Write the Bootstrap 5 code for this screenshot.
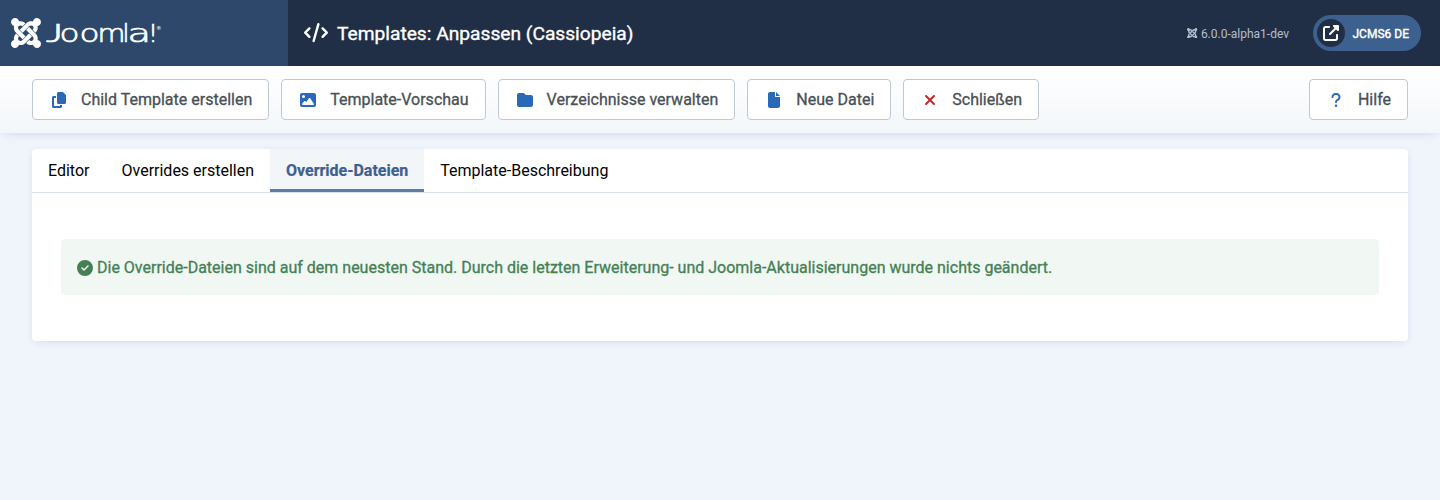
<!DOCTYPE html>
<html lang="de">
<head>
<meta charset="utf-8">
<meta name="viewport" content="width=device-width, initial-scale=1">
<title>Templates: Anpassen (Cassiopeia)</title>
<link href="https://cdn.jsdelivr.net/npm/bootstrap@5.3.0/dist/css/bootstrap.min.css" rel="stylesheet">
<style>
body { background: #f0f4fb; font-family: Roboto, sans-serif; font-size: 16px; min-height: 500px; }
svg { display: block; flex: none; fill: currentColor; }
.site-header { height: 66px; background: #212f46; color: #fff; }
.site-logo { width: 288px; background: #2d486b; padding-left: 11px; }
.site-logo .wordmark { margin-left: 5px; }
.page-heading { font-size: 19.2px; font-weight: 400; -webkit-text-stroke: .35px currentColor; line-height: 1.2; padding-left: 16px; }
.page-heading svg { margin-right: 9px; }
.page-heading span { padding-top: 1px; }
.version { font-size: 12px; color: #b3bfcd; margin-right: 24px; }
.version span { margin-left: 3px; padding-top: 1px; }
.site-link { background: #3d618f; height: 36px; width: 108px; padding-left: 4px; margin-right: 19px; font-size: 12px; font-weight: 400; -webkit-text-stroke: .4px currentColor; }
.site-link .disc { width: 28px; height: 28px; background: #212f46; margin-right: 7.5px; }
.site-link .site-name { padding-top: 1px; }
.subhead { height: 67px; padding: 13px 32px; gap: 12px; background: linear-gradient(#fff, #f3f7fa); box-shadow: 0 3px 10px -4px rgba(40,70,130,.22); }
.tool { display: flex; align-items: center; height: 41px; padding: 0 16px; border: 1px solid #c0c8d5; border-radius: 4px; background: #fff; color: #484f56; -webkit-text-stroke: .3px currentColor; white-space: nowrap; }
.tool .glyph { width: 20px; margin-right: 12px; color: #2a69b8; display: flex; justify-content: center; }
.tool .glyph.closing { color: #c52827; }
.panel { margin: 16px 32px 0; height: 192px; background: #fff; border-radius: 4px; box-shadow: 0 2px 8px -2px rgba(40,70,130,.16); overflow: hidden; }
.tabs { height: 44px; border-bottom: 1px solid #d8e1ed; }
.tabs a { padding: 0 16px; height: 43px; line-height: 43px; color: #000; text-decoration: none; white-space: nowrap; }
.tabs a.current { background: #f3f6f9; color: #3d618f; font-weight: 700; letter-spacing: -.02px; -webkit-text-stroke: .2px currentColor; box-shadow: inset 0 -3px #5d7ca5; }
.notice { margin: 46px 29px 0; height: 56px; padding: 1px 16px 0; gap: 4px; border-radius: 4px; background: #f1f8f4; color: #448054; -webkit-text-stroke: .3px currentColor; }
.tool svg, .notice svg, .page-heading svg { -webkit-text-stroke: 0; }
</style>
</head>
<body>
<svg width="0" height="0" class="position-absolute"><defs>
<symbol id="joomla" viewBox="0 32 448 448"><path d="M.6 92.1C.6 58.8 27.4 32 60.4 32c30 0 54.5 21.9 59.2 50.2 32.6-7.6 67.1.6 96.5 30l-44.3 44.3c-20.5-20.5-42.6-16.3-55.4-3.5-14.3 14.3-14.3 37.9 0 52.2l99.5 99.5-44 44.3c-87.7-87.2-49.7-49.7-99.8-99.7-26.8-26.5-35-64.8-24.8-98.9C20.4 144.6.6 120.7.6 92.1zm129.5 116.4l44.3 44.3c10-10 89.7-89.7 99.7-99.8 14.3-14.3 37.6-14.3 51.9 0 12.8 12.8 17 35-3.5 55.4l44 44.3c31.2-31.2 38.5-67.6 28.9-101.2 29.2-4.1 51.9-29.2 51.9-59.5 0-33.2-26.8-60.1-59.8-60.1-30.3 0-55.4 22.5-59.5 51.6-33.8-9.9-71.7-1.5-98.3 25.1-18.3 19.1-71.1 71.5-99.6 99.9zm266.3 152.2c8.2-32.7-.9-68.5-26.3-93.9-11.8-12.2 5 4.7-99.5-99.7l-44.3 44.3 99.7 99.7c14.3 14.3 14.3 37.6 0 51.9-12.8 12.8-35 17-55.4-3.5l-44 44.3c27.6 30.2 68 38.8 102.7 28 5.5 27.4 29.7 48.1 58.9 48.1 33 0 59.8-26.8 59.8-60.1 0-30.2-22.5-55-51.6-59.1zm-84.3-53.1l-44-44.3c-87 86.4-50.4 50.4-99.7 99.8-14.3 14.3-37.6 14.3-51.9 0-13.1-13.4-16.9-35.3 3.2-55.4l-44-44.3c-30.2 30.2-38 65.2-29.5 98.3-26.7 6-46.2 29.9-46.2 58.2C0 453.2 26.8 480 59.8 480c28.6 0 52.5-19.8 58.6-46.7 32.7 8.2 68.5-.6 94.2-26 32.1-32 12.2-12.4 99.5-99.7z"/></symbol>
</defs></svg>

<header class="site-header d-flex align-items-stretch">
  <div class="site-logo d-flex align-items-center">
    <svg width="30" height="30"><use href="#joomla"/></svg>
    <svg class="wordmark" width="118" height="30" font-family="'DejaVu Sans', sans-serif"><text y="24" font-size="25" font-weight="200" stroke="currentColor" stroke-width=".7"><tspan x="0" font-family="Lato" font-weight="300" textLength="17" lengthAdjust="spacingAndGlyphs">J</tspan><tspan x="13.5" textLength="40" lengthAdjust="spacingAndGlyphs">oo</tspan><tspan x="51.5" textLength="28" lengthAdjust="spacingAndGlyphs">m</tspan><tspan x="76.5">l</tspan><tspan x="81.5" textLength="23.5" lengthAdjust="spacingAndGlyphs">a</tspan><tspan x="102">!</tspan></text><text x="110" y="12" font-size="5.5">®</text></svg>
  </div>
  <div class="d-flex align-items-center flex-grow-1">
    <h1 class="page-heading d-flex align-items-center mb-0"><svg width="24" height="19.2" viewBox="0 0 640 512"><path d="M392.8 1.2c-17-4.9-34.7 5-39.6 22l-128 448c-4.9 17 5 34.7 22 39.6s34.7-5 39.6-22l128-448c4.9-17-5-34.7-22-39.6zm80.6 120.1c-12.5 12.5-12.5 32.8 0 45.3L562.7 256l-89.4 89.4c-12.5 12.5-12.5 32.8 0 45.3s32.8 12.5 45.3 0l112-112c12.5-12.5 12.5-32.8 0-45.3l-112-112c-12.5-12.5-32.8-12.5-45.3 0zm-306.7 0c-12.5-12.5-32.8-12.5-45.3 0l-112 112c-12.5 12.5-12.5 32.8 0 45.3l112 112c12.5 12.5 32.8 12.5 45.3 0s12.5-32.8 0-45.3L77.3 256l89.4-89.4c12.5-12.5 12.5-32.8 0-45.3z"/></svg><span>Templates: Anpassen (Cassiopeia)</span></h1>
    <div class="version d-flex align-items-center ms-auto"><svg width="10.5" height="10.5"><use href="#joomla"/></svg><span>6.0.0-alpha1-dev</span></div>
    <div class="site-link d-flex align-items-center rounded-pill"><span class="disc rounded-circle d-flex align-items-center justify-content-center"><svg width="16" height="16" viewBox="0 0 512 512"><path d="M352 0c-12.9 0-24.6 7.8-29.6 19.8s-2.2 25.7 6.9 34.9L370.7 96 201.4 265.4c-12.5 12.5-12.5 32.8 0 45.3s32.8 12.5 45.3 0L416 141.3l41.4 41.4c9.2 9.2 22.9 11.9 34.9 6.9s19.8-16.6 19.8-29.6V32c0-17.7-14.3-32-32-32H352zM80 32C35.8 32 0 67.8 0 112V432c0 44.2 35.8 80 80 80H400c44.2 0 80-35.8 80-80V320c0-17.7-14.3-32-32-32s-32 14.3-32 32V432c0 8.8-7.2 16-16 16H80c-8.8 0-16-7.2-16-16V112c0-8.8 7.2-16 16-16H192c17.7 0 32-14.3 32-32s-14.3-32-32-32H80z"/></svg></span><span class="site-name">JCMS6 DE</span></div>
  </div>
</header>

<div class="subhead d-flex">
  <button class="tool"><span class="glyph"><svg width="14" height="16" viewBox="0 0 448 512"><path d="M208 0H332.1c12.7 0 24.9 5.1 33.9 14.1l67.9 67.9c9 9 14.1 21.2 14.1 33.9V336c0 26.5-21.5 48-48 48H208c-26.5 0-48-21.5-48-48V48c0-26.5 21.5-48 48-48zM48 128h80v64H64V448H256V416h64v48c0 26.5-21.5 48-48 48H48c-26.5 0-48-21.5-48-48V176c0-26.5 21.5-48 48-48z"/></svg></span><span>Child Template erstellen</span></button>
  <button class="tool"><span class="glyph"><svg width="16" height="16" viewBox="0 0 512 512"><path fill-rule="evenodd" d="M0 96C0 60.7 28.7 32 64 32H448c35.3 0 64 28.7 64 64V416c0 35.3-28.7 64-64 64H64c-35.3 0-64-28.7-64-64V96zM323.8 202.5c-4.5-6.6-11.9-10.5-19.8-10.5s-15.4 3.9-19.8 10.5l-87 127.6L170.7 297c-4.6-5.7-11.5-9-18.7-9s-14.2 3.3-18.7 9l-64 80c-5.8 7.2-6.9 17.1-2.9 25.4s12.4 13.6 21.6 13.6h96 32H424c8.9 0 17.1-4.9 21.2-12.8s3.6-17.4-1.4-24.7l-120-176zM112 192a48 48 0 1 0 0-96 48 48 0 1 0 0 96z"/></svg></span><span>Template-Vorschau</span></button>
  <button class="tool"><span class="glyph"><svg width="16" height="16" viewBox="0 0 512 512"><path d="M64 480H448c35.3 0 64-28.7 64-64V160c0-35.3-28.7-64-64-64H288c-10.1 0-19.6-4.7-25.6-12.8L243.2 57.6C231.1 41.5 212.1 32 192 32H64C28.7 32 0 60.7 0 96V416c0 35.3 28.7 64 64 64z"/></svg></span><span>Verzeichnisse verwalten</span></button>
  <button class="tool"><span class="glyph"><svg width="12" height="16" viewBox="0 0 384 512"><path d="M0 64C0 28.7 28.7 0 64 0H224V128c0 17.7 14.3 32 32 32H384V448c0 35.3-28.7 64-64 64H64c-35.3 0-64-28.7-64-64V64zm384 64H256V0L384 128z"/></svg></span><span>Neue Datei</span></button>
  <button class="tool"><span class="glyph closing"><svg width="12" height="16" viewBox="0 0 384 512"><path d="M64 128L320 384M320 128L64 384" fill="none" stroke="currentColor" stroke-width="64" stroke-linecap="round"/></svg></span><span>Schließen</span></button>
  <button class="tool ms-auto"><span class="glyph"><svg width="10" height="16" viewBox="0 0 320 512"><path d="M80 160c0-35.3 28.7-64 64-64h32c35.3 0 64 28.7 64 64v3.6c0 21.8-11.1 42.1-29.4 53.8l-42.2 27.1c-25.2 16.2-40.4 44.1-40.4 74V320c0 17.7 14.3 32 32 32s32-14.3 32-32v-1.4c0-8.2 4.2-15.8 11-20.2l42.2-27.1c36.6-23.6 58.8-64.1 58.8-107.7V160c0-70.7-57.3-128-128-128H144C73.3 32 16 89.3 16 160c0 17.7 14.3 32 32 32s32-14.3 32-32zm80 320a40 40 0 1 0 0-80 40 40 0 1 0 0 80z"/></svg></span><span>Hilfe</span></button>
</div>

<main class="panel">
  <nav class="tabs d-flex">
    <a href="#">Editor</a>
    <a href="#">Overrides erstellen</a>
    <a href="#" class="current">Override-Dateien</a>
    <a href="#">Template-Beschreibung</a>
  </nav>
  <div class="notice d-flex align-items-center"><svg width="16" height="16" viewBox="0 0 512 512"><path d="M256 512A256 256 0 1 0 256 0a256 256 0 1 0 0 512zM369 209L241 337c-9.4 9.4-24.6 9.4-33.9 0l-64-64c-9.4-9.4-9.4-24.6 0-33.9s24.6-9.4 33.9 0l47 47L335 175c9.4-9.4 24.6-9.4 33.9 0s9.4 24.6 0 33.9z"/></svg><span>Die Override-Dateien sind auf dem neuesten Stand. Durch die letzten Erweiterung- und Joomla-Aktualisierungen wurde nichts geändert.</span></div>
</main>
<script src="https://cdn.jsdelivr.net/npm/bootstrap@5.3.0/dist/js/bootstrap.bundle.min.js"></script>
</body>
</html>
